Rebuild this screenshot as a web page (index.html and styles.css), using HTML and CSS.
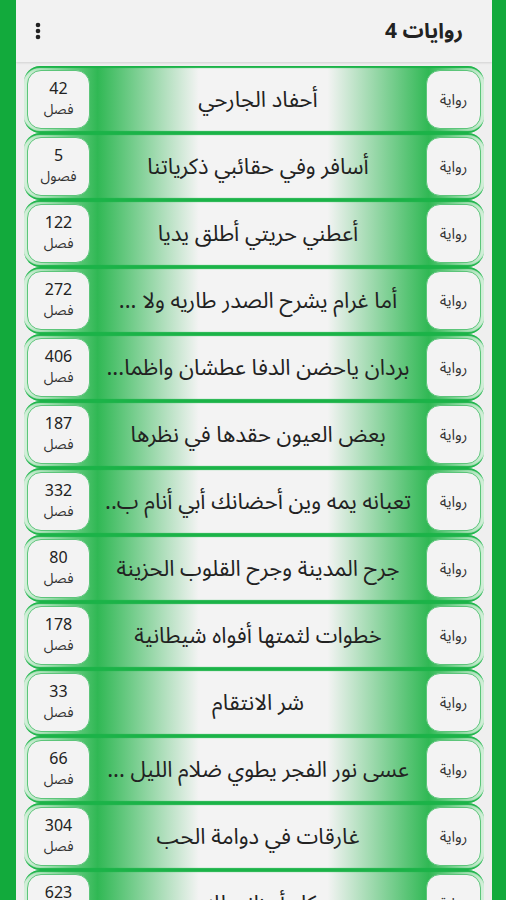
FILE: index.html
```html
<!DOCTYPE html>
<html lang="ar" dir="rtl">
<head>
  <meta charset="UTF-8">
  <meta name="viewport" content="width=device-width, initial-scale=1.0">
  <title>روايات 4</title>
  <link rel="stylesheet" href="styles.css">
</head>
<body>
  <div class="frame">
    <header class="app-bar">
      <h1>روايات 4</h1>
      <button class="menu" aria-label="menu">
        <svg width="6" height="18" viewBox="0 0 6 18">
          <circle cx="3" cy="3" r="2.3" fill="#222"/>
          <circle cx="3" cy="9" r="2.3" fill="#222"/>
          <circle cx="3" cy="15" r="2.3" fill="#222"/>
        </svg>
      </button>
    </header>

    <ul class="novels">
      <li class="row"><span class="tag">رواية</span><span class="title">أحفاد الجارحي</span><span class="count"><b>42</b><small>فصل</small></span></li>
      <li class="row"><span class="tag">رواية</span><span class="title">أسافر وفي حقائبي ذكرياتنا</span><span class="count"><b>5</b><small>فصول</small></span></li>
      <li class="row"><span class="tag">رواية</span><span class="title">أعطني حريتي أطلق يديا</span><span class="count"><b>122</b><small>فصل</small></span></li>
      <li class="row"><span class="tag">رواية</span><span class="title">أما غرام يشرح الصدر طاريه ولا ...</span><span class="count"><b>272</b><small>فصل</small></span></li>
      <li class="row"><span class="tag">رواية</span><span class="title">بردان ياحضن الدفا عطشان واظما...</span><span class="count"><b>406</b><small>فصل</small></span></li>
      <li class="row"><span class="tag">رواية</span><span class="title">بعض العيون حقدها في نظرها</span><span class="count"><b>187</b><small>فصل</small></span></li>
      <li class="row"><span class="tag">رواية</span><span class="title">تعبانه يمه وين أحضانك أبي أنام ب..</span><span class="count"><b>332</b><small>فصل</small></span></li>
      <li class="row"><span class="tag">رواية</span><span class="title">جرح المدينة وجرح القلوب الحزينة</span><span class="count"><b>80</b><small>فصل</small></span></li>
      <li class="row"><span class="tag">رواية</span><span class="title">خطوات لثمتها أفواه شيطانية</span><span class="count"><b>178</b><small>فصل</small></span></li>
      <li class="row"><span class="tag">رواية</span><span class="title">شر الانتقام</span><span class="count"><b>33</b><small>فصل</small></span></li>
      <li class="row"><span class="tag">رواية</span><span class="title">عسى نور الفجر يطوي ضلام الليل ...</span><span class="count"><b>66</b><small>فصل</small></span></li>
      <li class="row"><span class="tag">رواية</span><span class="title">غارقات في دوامة الحب</span><span class="count"><b>304</b><small>فصل</small></span></li>
      <li class="row"><span class="tag">رواية</span><span class="title">كل أحزاني لك</span><span class="count"><b>623</b><small>فصل</small></span></li>
    </ul>
  </div>
</body>
</html>
```

FILE: styles.css
```css
body {
  margin: 0;
  font-family: "Noto Sans Arabic", "DejaVu Sans", sans-serif;
  background: #0fa338;
  color: #222;
}

.frame {
  min-height: 900px;
  border-left: 16px solid #12aa3c;
  border-right: 14px solid #12aa3c;
  background: #efefef;
  overflow: hidden;
}

/* Top bar */
.app-bar {
  height: 62px;
  display: flex;
  align-items: center;
  justify-content: space-between;
  padding: 0 29px 0 18px;
  background: #f2f2f2;
  box-shadow: 0 1px 2px rgba(0, 0, 0, 0.12);
}

.app-bar h1 {
  margin: 0;
  font-size: 21px;
  font-weight: bold;
}

.menu {
  border: none;
  background: none;
  padding: 0;
  width: 8px;
  display: flex;
  justify-content: center;
}

/* Novel rows */
.novels {
  list-style: none;
  margin: 0;
  padding: 4px 8px 0;
  display: flex;
  flex-direction: column;
}

.row {
  height: 59px;
  padding: 4px 3px;
  display: flex;
  align-items: stretch;
  border-radius: 16px;
  background: linear-gradient(to right, #d6f0dc 0%, #30b854 16%, #f3f3f3 38%, #f3f3f3 66%, #30b854 88%, #d6f0dc 100%);
  box-shadow: inset 0 3px 1px -1px #1bb348, inset 0 -3px 1px -1px #1bb348;
}

.tag,
.count {
  flex: none;
  display: flex;
  flex-direction: column;
  align-items: center;
  justify-content: center;
  background: #f3f3f3;
  border: 1px solid #5cc57a;
  border-radius: 14px;
  box-sizing: border-box;
}

.tag {
  width: 55px;
  font-size: 15px;
  color: #333;
}

.count {
  width: 63px;
  gap: 2px;
  color: #222;
}

.count b {
  display: block;
  font-weight: normal;
  font-size: 16px;
  line-height: 18px;
}

.count small {
  display: block;
  font-size: 14px;
  line-height: 20px;
  color: #333;
}

.title {
  flex: 1;
  min-width: 0;
  display: flex;
  align-items: center;
  justify-content: center;
  padding: 0 6px;
  font-size: 22px;
  white-space: nowrap;
  overflow: hidden;
}
```
